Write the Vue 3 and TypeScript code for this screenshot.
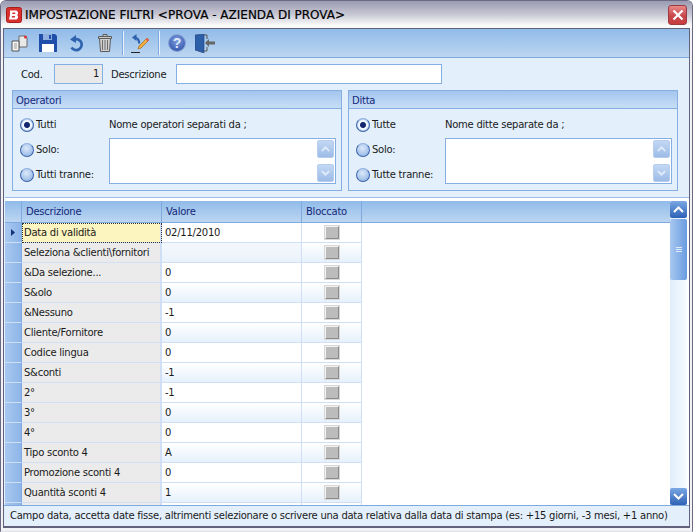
<script setup lang="ts">
	interface Row {
		label: string;
		value: string;
	}

	const rows: Row[] = [
		{ label: "Data di validità", value: "02/11/2010" },
		{ label: "Seleziona &clienti\\fornitori", value: "" },
		{ label: "&Da selezione...", value: "0" },
		{ label: "S&olo", value: "0" },
		{ label: "&Nessuno", value: "-1" },
		{ label: "Cliente/Fornitore", value: "0" },
		{ label: "Codice lingua", value: "0" },
		{ label: "S&conti", value: "-1" },
		{ label: "2°", value: "-1" },
		{ label: "3°", value: "0" },
		{ label: "4°", value: "0" },
		{ label: "Tipo sconto 4", value: "A" },
		{ label: "Promozione sconti 4", value: "0" },
		{ label: "Quantità sconti 4", value: "1" },
		{ label: "", value: "" },
	];

	const groups = [
		{ cls: "op", title: "Operatori", all: "Tutti", except: "Tutti tranne:", hint: "Nome operatori separati da ;" },
		{ cls: "di", title: "Ditta", all: "Tutte", except: "Tutte tranne:", hint: "Nome ditte separate da ;" },
	];
</script>

<template>
	<div class="window">
		<div class="titlebar">
			<svg class="logo" width="16" height="16" viewBox="0 0 16 16">
				<rect x="0.5" y="0.5" width="15" height="15" rx="2" fill="#d8302c" stroke="#a81c1c" />
				<path d="M4 3.500h6.500l1.500 1.500v2l-1 1 1 1v2l-1.500 1.500H3l1-4.500z M6.500 5.500l-.3 1.500h3v-1.500z M6 9l-.3 1.500h3.300v-1.500z" fill="#fff" fill-rule="evenodd" />
			</svg>
			<span class="title">IMPOSTAZIONE FILTRI &lt;PROVA - AZIENDA DI PROVA&gt;</span>
			<div class="close">
				<svg width="12" height="12" viewBox="0 0 12 12">
					<path d="M1.500 1.500l9 9M10.500 1.500l-9 9" stroke="#fff" stroke-width="2.200" />
				</svg>
			</div>
		</div>

		<div class="body">
			<div class="toolbar">
				<svg class="ic copy" width="17" height="17" viewBox="0 0 17 17">
					<path d="M8 1h6l2 2v9H8z" fill="#e8e8e8" stroke="#6b6b6b" />
					<path d="M1 6h7v10H1z" fill="#f4f4f4" stroke="#555" />
					<path d="M3 9h3M3 11h3M3 13h3" stroke="#999" />
					<circle cx="14.500" cy="2" r="1.500" fill="#d83030" />
				</svg>
				<svg class="ic save" width="18" height="18" viewBox="0 0 18 18">
					<path d="M0 0h16l2 2v16H0z" fill="#1f4fa8" />
					<path d="M4 0h9v6H4z" fill="#8fb0de" />
					<path d="M10 1h2v4h-2z" fill="#1f4fa8" />
					<path d="M3 10h12v8H3z" fill="#fff" />
				</svg>
				<svg class="ic undo" width="15" height="17" viewBox="0 0 15 17">
					<path d="M3.500 5.500a5.500 5.500 0 1 1 -1 7" fill="none" stroke="#2f62ad" stroke-width="2.600" />
					<path d="M7 0v8L1 4.500z" fill="#2f62ad" />
				</svg>
				<svg class="ic trash" width="14" height="18" viewBox="0 0 14 18">
					<path d="M5 .5h4v2H5zM.5 2.500h13v2H.5z" fill="#c8c8c8" stroke="#5c5c5c" />
					<path d="M1.500 4.500h11l-1 13h-9z" fill="#cfcfcf" stroke="#5c5c5c" />
					<path d="M4.500 6v10M7 6v10M9.500 6v10" stroke="#6e6e6e" />
				</svg>
				<i class="sep first" />
				<svg class="ic edit" width="19" height="19" viewBox="0 0 19 19">
					<path d="M3 3.500a5 5 0 0 1 5 6" fill="none" stroke="#2f62ad" stroke-width="2.200" />
					<path d="M5.500 0v7L1 3.500z" fill="#2f62ad" />
					<path d="M16 4l2 2-8 8-3 1 1-3z" fill="#f0b040" stroke="#a06820" stroke-width=".7" />
					<path d="M16 4l2 2-1.500 1.500-2-2z" fill="#e06060" />
					<path d="M0 18.500h9" stroke="#222" />
				</svg>
				<i class="sep second" />
				<svg class="ic help" width="18" height="18" viewBox="0 0 18 18">
					<defs>
						<radialGradient id="helpFill" cx="50%" cy="35%" r="70%">
							<stop offset="0" stop-color="#7f9fe0" />
							<stop offset="1" stop-color="#2f52a8" />
						</radialGradient>
					</defs>
					<circle cx="9" cy="9" r="8.500" fill="url(#helpFill)" stroke="#8ea6d8" />
					<text x="9" y="14" text-anchor="middle" font-family="Liberation Sans" font-size="14" font-weight="700" fill="#dfe8fa">?</text>
				</svg>
				<svg class="ic door" width="20" height="19" viewBox="0 0 20 19">
					<path d="M0 1l9 -1v19L0 16z" fill="#2d5fa8" stroke="#1f3f78" stroke-width=".6" />
					<path d="M9 1h3v4M12 13v4H9" fill="none" stroke="#555" />
					<path d="M20 7.500h-6V5l-4 4 4 4v-2.500h6z" fill="#666" />
				</svg>
			</div>

			<div class="form">
				<div class="cod-row">
					<span class="cod-label">Cod.</span>
					<div class="cod-input">1</div>
					<span class="desc-label">Descrizione</span>
					<div class="desc-input" />
				</div>

				<div class="groups">
					<section v-for="g in groups" :key="g.cls" class="group" :class="g.cls">
						<header class="group-head">{{ g.title }}</header>
						<div class="group-body">
							<div class="radios">
								<label class="radio"><i class="dot on" />{{ g.all }}</label>
								<label class="radio"><i class="dot" />Solo:</label>
								<label class="radio"><i class="dot" />{{ g.except }}</label>
							</div>
							<div class="names">
								<div class="hint">{{ g.hint }}</div>
								<div class="names-box">
									<div class="spin">
										<span class="spin-btn">
											<svg width="9" height="6" viewBox="0 0 9 6"><path d="M.8 5l3.700-3.700L8.200 5" fill="none" stroke="#dfeafa" stroke-width="1.800" /></svg>
										</span>
										<span class="spin-btn">
											<svg width="9" height="6" viewBox="0 0 9 6"><path d="M.8 1l3.700 3.700L8.200 1" fill="none" stroke="#dfeafa" stroke-width="1.800" /></svg>
										</span>
									</div>
								</div>
							</div>
						</div>
					</section>
				</div>
			</div>

			<div class="grid">
				<div class="table">
					<div class="thead">
						<div class="c-ind" />
						<div class="c-desc">Descrizione</div>
						<div class="c-val">Valore</div>
						<div class="c-lock">Bloccato</div>
						<div class="c-rest" />
					</div>
					<div v-for="(r, i) in rows" :key="i" class="tr" :class="{ alt: i % 2 === 1 }">
						<div class="c-ind ind-cell">
							<svg v-if="i === 0" width="4" height="7" viewBox="0 0 4 7"><path d="M0 0l4 3.500L0 7z" fill="#14327a" /></svg>
						</div>
						<div class="c-desc label-cell" :class="{ current: i === 0 }">{{ r.label }}</div>
						<div class="c-val val-cell" :class="{ empty: i === 1 }">{{ r.value }}</div>
						<div class="c-lock lock-cell"><i v-if="i < 14" class="check" /></div>
					</div>
				</div>
				<div class="scroll">
					<div class="sb-btn">
						<svg width="11" height="7" viewBox="0 0 11 7"><path d="M1 6l4.500-4.500L10 6" fill="none" stroke="#fff" stroke-width="2" /></svg>
					</div>
					<div class="sb-thumb"><i /><i /><i /></div>
					<div class="sb-track" />
					<div class="sb-btn">
						<svg width="11" height="7" viewBox="0 0 11 7"><path d="M1 1l4.500 4.500L10 1" fill="none" stroke="#fff" stroke-width="2" /></svg>
					</div>
				</div>
			</div>

			<div class="status">Campo data, accetta date fisse, altrimenti selezionare o scrivere una data relativa dalla data di stampa (es: +15 giorni, -3 mesi, +1 anno)</div>
		</div>
	</div>
</template>

<style>
	html,
	body {
		margin: 0;
		background: #fff;
	}
</style>

<style scoped>
	* {
		box-sizing: border-box;
	}

	.window {
		width: 693px;
		height: 532px;
		display: flex;
		flex-direction: column;
		padding: 0 2px 3px;
		background: #f2f2f6;
		border: 1px solid #6a6a84;
		border-bottom-color: #dfe0e8;
		border-radius: 6px 6px 0 0;
		font-family: "DejaVu Sans", sans-serif;
		font-size: 10px;
		letter-spacing: -0.25px;
		color: #1a1a1a;
	}

	.titlebar {
		height: 27px;
		flex: none;
		margin: 0 -2px;
		padding: 1px 5px 0 5px;
		display: flex;
		align-items: center;
		border-radius: 5px 5px 0 0;
		background: linear-gradient(#9a9ab2, #c8c8d4 50%, #fafafa 90%);
	}

	.logo {
		flex: none;
	}

	.title {
		margin-left: 3px;
		font-size: 12px;
		letter-spacing: 0;
		color: #000;
		flex: 1;
		white-space: nowrap;
		-webkit-text-stroke: 0.2px #000;
	}

	.close {
		width: 19px;
		height: 20px;
		display: flex;
		align-items: center;
		justify-content: center;
		border: 1px solid #9c3a40;
		border-radius: 3px;
		background: linear-gradient(#e88a88, #c8484c 55%, #c83c40);
	}

	.body {
		flex: 1;
		display: flex;
		flex-direction: column;
		min-height: 0;
		border: 1px solid #62627c;
		border-width: 1px 1px 2px;
		background: #e3f0fc;
	}

	.toolbar {
		height: 29px;
		flex: none;
		display: flex;
		align-items: center;
		padding-left: 7px;
		background: linear-gradient(#91bbe9, #bcd6f1);
		border-bottom: 1px solid #7faae0;
	}

	.ic {
		flex: none;
	}

	.save {
		margin-left: 11px;
	}

	.undo {
		margin-left: 12px;
	}

	.trash {
		margin-left: 14px;
	}

	.sep {
		width: 2px;
		height: 24px;
		background: #eaf3fc;
		border-left: 1px solid #7faae0;
	}

	.sep.first {
		margin: 0 7px 0 10px;
	}

	.sep.second {
		margin: 0 8px;
	}

	.door {
		margin-left: 9px;
	}

	.form {
		flex: none;
		padding: 6px 11px 0 8px;
		height: 139px;
	}

	.cod-row {
		height: 20px;
		display: flex;
		align-items: center;
		padding-left: 9px;
	}

	.cod-label {
		width: 33px;
	}

	.cod-input {
		width: 49px;
		height: 20px;
		padding-right: 3px;
		line-height: 18px;
		text-align: right;
		background: #e9e9e9;
		border: 1px solid #85aee2;
	}

	.desc-label {
		width: 73px;
		padding-left: 8px;
	}

	.desc-input {
		width: 266px;
		height: 20px;
		background: #fff;
		border: 1px solid #85aee2;
	}

	.groups {
		display: flex;
		gap: 6px;
		margin-top: 6px;
	}

	.group {
		width: 330px;
		height: 101px;
		border: 1px solid #85aee2;
	}

	.group-head {
		height: 18px;
		padding-left: 3px;
		line-height: 20px;
		color: #14287a;
		border-bottom: 1px solid #85aee2;
		background:
			radial-gradient(ellipse 70% 90% at 68% 130%, #c4dbf4 60%, transparent 62%),
			linear-gradient(#a3c5ee, #c8def6);
	}

	.group-body {
		display: flex;
		padding-left: 7px;
	}

	.radios {
		width: 89px;
		flex: none;
		padding-top: 3px;
	}

	.radio {
		display: flex;
		align-items: center;
		height: 25px;
		gap: 2px;
	}

	.dot {
		width: 14px;
		height: 14px;
		border-radius: 50%;
		flex: none;
		border: 1px solid #3d62a8;
		border-top-color: #8fb0de;
		background: radial-gradient(circle at 45% 35%, #dce9fa, #a0bfe8 70%);
	}

	.dot.on {
		background: radial-gradient(circle, #12266e 0 2.500px, #f0f6fe 3.500px 4.500px, #a8c4e8 6px);
	}

	.names {
		flex: 1;
		padding-right: 5px;
	}

	.hint {
		height: 29px;
		line-height: 31px;
	}

	.names-box {
		height: 46px;
		background: #fff;
		border: 1px solid #85aee2;
		display: flex;
		justify-content: flex-end;
	}

	.spin {
		width: 17px;
		margin-right: 1px;
		padding-top: 1px;
		display: flex;
		flex-direction: column;
		justify-content: space-between;
		padding-bottom: 1px;
	}

	.spin-btn {
		height: 18px;
		display: flex;
		align-items: center;
		justify-content: center;
		border-radius: 2px;
		background: linear-gradient(#c2d8f3, #9dbbe6);
		border: 1px solid #b6cdee;
	}

	.grid {
		height: 308px;
		flex: none;
		margin: 0 0 0 1px;
		display: flex;
		padding-top: 3px;
		border-top: 1px solid #9cbdea;
		background: #fff;
	}

	.table {
		flex: 1;
		min-width: 0;
		overflow: hidden;
	}

	.thead {
		height: 22px;
		display: flex;
		color: #14287a;
		line-height: 22px;
		background: linear-gradient(#91bbe9, #bcd6f1);
		border-bottom: 1px solid #7faae0;
	}

	.thead > div {
		border-right: 1px solid #7faae0;
		padding-left: 4px;
	}

	.thead .c-rest {
		border-right: 0;
	}

	.tr {
		height: 20px;
		display: flex;
		line-height: 19px;
	}

	.tr > div {
		border-bottom: 1px solid #d0dff5;
	}

	.tr.alt .c-val,
	.tr.alt .c-lock {
		background: linear-gradient(#fff, #e6f1fc);
	}

	.c-ind {
		width: 17px;
		flex: none;
	}

	.c-desc,
	.c-val {
		width: 140px;
		flex: none;
	}

	.c-lock {
		width: 60px;
		flex: none;
	}

	.c-rest {
		flex: 1;
	}

	.ind-cell {
		display: flex;
		align-items: center;
		justify-content: center;
		background: linear-gradient(90deg, #a8c8f0, #8db5e8);
		border-right: 1px solid #7faae0;
	}

	.label-cell {
		padding-left: 2px;
		background: #ebebeb;
		border-right: 2px solid #d0dff5;
	}

	.label-cell.current {
		background: #fdf5bf;
		outline: 1px dotted #333;
		outline-offset: -1px;
	}

	.val-cell {
		padding-left: 3px;
		border-right: 1px solid #d0dff5;
	}

	.val-cell.empty {
		background: linear-gradient(#f4f8fd, #e9f2fb) !important;
	}

	.lock-cell {
		display: flex;
		align-items: center;
		justify-content: center;
		border-right: 1px solid #d0dff5;
	}

	.check {
		width: 14px;
		height: 13px;
		background: #bcbcbc;
		border: 1px solid;
		border-color: #f2f2f2 #8c8c8c #8c8c8c #f2f2f2;
		box-shadow: 0 0 0 1px #d8d8d8;
	}

	.scroll {
		width: 17px;
		margin-right: 2px;
		flex: none;
		display: flex;
		flex-direction: column;
		background: linear-gradient(90deg, #e0eefb, #f6fbff);
	}

	.sb-btn {
		height: 17px;
		flex: none;
		display: flex;
		align-items: center;
		justify-content: center;
		background: linear-gradient(#7aa8e4, #2e62b4);
		border-radius: 2px;
	}

	.sb-thumb {
		height: 61px;
		flex: none;
		margin-top: 1px;
		display: flex;
		flex-direction: column;
		align-items: center;
		justify-content: center;
		gap: 1px;
		border-radius: 2px;
		background: linear-gradient(90deg, #a8c8f0, #6a9ce0);
	}

	.sb-thumb i {
		width: 6px;
		height: 1px;
		background: #dfeafa;
	}

	.sb-track {
		flex: 1;
	}

	.status {
		flex: 1;
		padding-left: 6px;
		line-height: 20px;
		white-space: nowrap;
		border-top: 1px solid #7faae0;
		background: #e3f0fc;
	}
</style>
